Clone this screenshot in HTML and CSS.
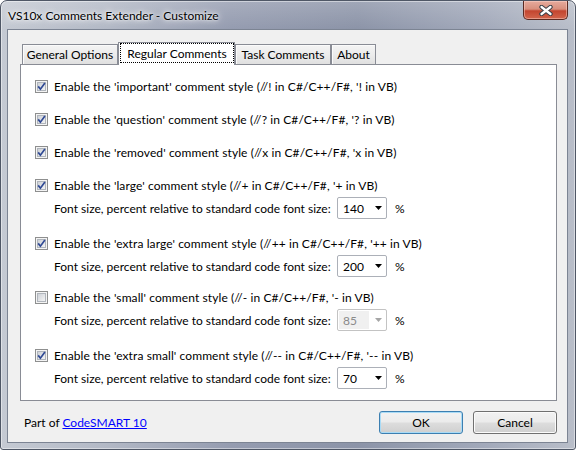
FILE: index.html
```html
<!DOCTYPE html>
<html lang="en">
<head>
<meta charset="utf-8">
<title>VS10x Comments Extender - Customize</title>
<link rel="stylesheet" href="styles.css">
</head>
<body>
<svg class="defs" width="0" height="0" aria-hidden="true">
  <defs>
    <linearGradient id="cb-fill" x1="0" y1="0" x2="1" y2="1">
      <stop offset="0" stop-color="#cbcfd5"/>
      <stop offset="1" stop-color="#f6f6f6"/>
    </linearGradient>
    <symbol id="cb-box" viewBox="0 0 13 13">
      <rect x="0.5" y="0.5" width="12" height="12" fill="#f4f4f4" stroke="#8e8f8f"/>
      <rect x="2.5" y="2.5" width="8" height="8" fill="url(#cb-fill)" stroke="#b0b5bc"/>
    </symbol>
    <symbol id="cb-on" viewBox="0 0 13 13">
      <use href="#cb-box"/>
      <path d="M3.2 6.4 L5.4 9.2 L9.9 3" fill="none" stroke="#2f4994" stroke-width="1.7"/>
    </symbol>
    <symbol id="arrow" viewBox="0 0 7 4">
      <polygon points="0,0 7,0 3.5,4"/>
    </symbol>
  </defs>
</svg>

<div class="window">
  <div class="titlebar">
    <span class="title">VS10x Comments Extender - Customize</span>
    <button class="close" type="button" aria-label="Close">
      <svg width="14" height="11" viewBox="0 0 14 11">
        <path d="M2.5 2 L11.5 9 M11.5 2 L2.5 9" stroke="#3b3f47" stroke-width="4.4" stroke-linecap="round"/>
        <path d="M2.5 2 L11.5 9 M11.5 2 L2.5 9" stroke="#ffffff" stroke-width="2.3" stroke-linecap="round"/>
      </svg>
    </button>
  </div>

  <div class="client">
    <div class="tabs">
      <div class="tab tab-general">General Options</div>
      <div class="tab tab-regular active"><span class="focus">Regular Comments</span></div>
      <div class="tab tab-task">Task Comments</div>
      <div class="tab tab-about">About</div>
    </div>

    <div class="panel">
      <label class="check">
        <svg class="cb"><use href="#cb-on"/></svg>
        <span>Enable the 'important' comment style (//! in C#/C++/F#, '! in VB)</span>
      </label>
      <label class="check">
        <svg class="cb"><use href="#cb-on"/></svg>
        <span>Enable the 'question' comment style (//? in C#/C++/F#, '? in VB)</span>
      </label>
      <label class="check">
        <svg class="cb"><use href="#cb-on"/></svg>
        <span>Enable the 'removed' comment style (//x in C#/C++/F#, 'x in VB)</span>
      </label>

      <label class="check">
        <svg class="cb"><use href="#cb-on"/></svg>
        <span>Enable the 'large' comment style (//+ in C#/C++/F#, '+ in VB)</span>
      </label>
      <div class="size-row">
        <span class="size-label">Font size, percent relative to standard code font size:</span>
        <span class="combo"><span class="value">140</span><svg class="arrow"><use href="#arrow"/></svg></span>
        <span class="pct">%</span>
      </div>

      <label class="check">
        <svg class="cb"><use href="#cb-on"/></svg>
        <span>Enable the 'extra large' comment style (//++ in C#/C++/F#, '++ in VB)</span>
      </label>
      <div class="size-row">
        <span class="size-label">Font size, percent relative to standard code font size:</span>
        <span class="combo"><span class="value">200</span><svg class="arrow"><use href="#arrow"/></svg></span>
        <span class="pct">%</span>
      </div>

      <label class="check tight">
        <svg class="cb"><use href="#cb-box"/></svg>
        <span>Enable the 'small' comment style (//- in C#/C++/F#, '- in VB)</span>
      </label>
      <div class="size-row">
        <span class="size-label">Font size, percent relative to standard code font size:</span>
        <span class="combo disabled"><span class="value">85</span><svg class="arrow"><use href="#arrow"/></svg></span>
        <span class="pct">%</span>
      </div>

      <label class="check">
        <svg class="cb"><use href="#cb-on"/></svg>
        <span>Enable the 'extra small' comment style (//-- in C#/C++/F#, '-- in VB)</span>
      </label>
      <div class="size-row">
        <span class="size-label">Font size, percent relative to standard code font size:</span>
        <span class="combo"><span class="value">70</span><svg class="arrow"><use href="#arrow"/></svg></span>
        <span class="pct">%</span>
      </div>
    </div>

    <div class="footer">
      <span class="part-of">Part of <a href="#" class="link">CodeSMART 10</a></span>
      <div class="buttons">
        <button class="btn default" type="button">OK</button>
        <button class="btn" type="button">Cancel</button>
      </div>
    </div>
  </div>
</div>
</body>
</html>
```

FILE: styles.css
```css
* {
  box-sizing: border-box;
}

html, body {
  margin: 0;
  background: #ffffff;
}

body {
  font-family: Lato, "Open Sans", "Liberation Sans", sans-serif;
  font-size: 12px;
  color: #000;
}

.defs {
  display: block;
  width: 0;
  height: 0;
  overflow: hidden;
}

/* window frame */
.window {
  width: 576px;
  height: 450px;
  border: 1px solid #4f5766;
  border-radius: 7px 7px 3px 3px;
  padding: 0 7px 6px 6px;
  display: flex;
  flex-direction: column;
  background:
    linear-gradient(180deg, rgba(255,255,255,0.18) 0, rgba(255,255,255,0) 28px),
    linear-gradient(90deg, #c5cad3 0%, #b3b9c6 18%, #959cb0 40%, #8c94a8 62%, #a2a9ba 84%, #b9bec9 100%);
  box-shadow: inset 0 0 0 1px rgba(255,255,255,0.45);
}

.titlebar {
  height: 28px;
  flex: none;
  display: flex;
  align-items: flex-start;
  padding-left: 1px;
}

.title {
  margin-top: 7px;
  line-height: 15px;
  color: #000;
  text-shadow: 0 0 9px rgba(255,255,255,0.95), 0 0 5px rgba(255,255,255,0.9), 0 0 2px rgba(255,255,255,0.8);
}

.close {
  margin-left: auto;
  width: 45px;
  height: 19px;
  padding: 0;
  border: 1px solid #5b2a22;
  border-top: none;
  border-radius: 0 0 5px 5px;
  display: flex;
  align-items: center;
  justify-content: center;
  background: linear-gradient(180deg, #e6ab9d 0%, #d88f7d 45%, #c3452f 55%, #d2654c 100%);
  box-shadow: inset 0 0 0 1px rgba(255,220,210,0.45);
}

/* client area */
.client {
  flex: 1;
  border: 1px solid #7c8493;
  background: #f0f0f0;
  padding: 12px 10px 8px 12px;
  display: flex;
  flex-direction: column;
}

.tabs {
  display: flex;
  align-items: flex-end;
  height: 22px;
  flex: none;
  padding-left: 2px;
}

.tab {
  height: 20px;
  border: 1px solid #898c95;
  border-bottom: none;
  background: linear-gradient(180deg, #f4f4f4 0%, #ececec 50%, #e0e0e0 100%);
  box-shadow: inset 1px 1px 0 #fbfbfb;
  display: flex;
  align-items: center;
  justify-content: center;
  white-space: nowrap;
}

.tab-general { width: 96px; }
.tab-regular { width: 117px; }
.tab-task { width: 96px; }
.tab-about { width: 45px; }

.tab.active {
  height: 23px;
  margin-bottom: -1px;
  position: relative;
  z-index: 1;
  background: #ffffff;
  box-shadow: none;
  padding: 0 0 2px 1px;
  align-items: stretch;
}

.focus {
  flex: 1;
  border: 1px dotted #000;
  display: flex;
  align-items: center;
  justify-content: center;
}

.panel {
  height: 337px;
  flex: none;
  border: 1px solid #898c95;
  background: #ffffff;
  padding: 11px 0 0 14px;
  display: flex;
  flex-direction: column;
}

.check {
  display: flex;
  align-items: center;
  gap: 6px;
  height: 20px;
  white-space: nowrap;
  letter-spacing: 0.1px;
}

.check + .check {
  margin-top: 13px;
}

.size-row + .check {
  margin-top: 14px;
}

.size-row + .check.tight {
  margin-top: 10px;
}

.cb {
  width: 13px;
  height: 13px;
  flex: none;
}

.size-row {
  display: flex;
  align-items: center;
  height: 22px;
  margin-top: 2px;
  margin-left: 19px;
  white-space: nowrap;
}

.size-label {
  width: 283px;
  flex: none;
}

.combo {
  width: 50px;
  height: 22px;
  border: 1px solid #acb0b8;
  border-radius: 2px;
  background: #fff;
  display: flex;
  align-items: center;
  padding-right: 4px;
}

.combo .value {
  width: 30px;
  align-self: stretch;
  margin: 1px auto 1px 1px;
  padding-left: 4px;
  display: flex;
  align-items: center;
}

.arrow {
  width: 7px;
  height: 4px;
  fill: #000;
}

.combo.disabled {
  border-color: #c3c3c3;
  color: #8a8a8a;
}

.combo.disabled .value {
  background: #f0f0f0;
}

.combo.disabled .arrow {
  fill: #a6a6a6;
}

.pct {
  margin-left: 8px;
}

/* footer */
.footer {
  margin-top: 10px;
  height: 23px;
  flex: none;
  display: flex;
  align-items: center;
  padding-left: 4px;
}

.link {
  color: #0000ff;
  text-decoration: underline;
}

.buttons {
  margin-left: auto;
  display: flex;
  gap: 10px;
}

.btn {
  width: 84px;
  height: 23px;
  font: inherit;
  color: #000;
  padding: 0;
  border: 1px solid #707070;
  border-radius: 3px;
  background: linear-gradient(180deg, #f2f2f2 0%, #ebebeb 48%, #dddddd 52%, #cfcfcf 100%);
  box-shadow: inset 0 0 0 1px #fbfbfb;
}

.btn.default {
  border-color: #3c7fb1;
  box-shadow: inset 0 0 0 1px #a9dbf6;
}
```
